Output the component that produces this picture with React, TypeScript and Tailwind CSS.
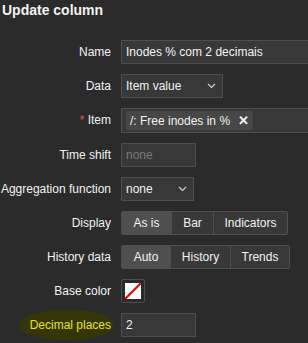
const labelCls = "text-right text-[12px] text-[#f2f2f2] leading-[24px] whitespace-nowrap";
const boxCls =
  "h-[24px] border border-[#4f4f4f] bg-[#383838] text-[12px] leading-[22px] px-[4px] box-border";
const inputCls = `${boxCls} text-[#f2f2f2]`;

function Chevron() {
  return (
    <svg width="9" height="6" viewBox="0 0 9 6" className="shrink-0">
      <path d="M1 1 L4.5 4.5 L8 1" fill="none" stroke="#d0d0d0" strokeWidth="1.2" />
    </svg>
  );
}

function Select({ value, width }: { value: string; width: string }) {
  return (
    <div className={`${inputCls} ${width} flex items-center justify-between pr-[6px]`}>
      <span>{value}</span>
      <Chevron />
    </div>
  );
}

function Segmented({ items, widths }: { items: string[]; widths: string[] }) {
  return (
    <div className="flex h-[24px] border border-[#4f4f4f] rounded-[2px] bg-[#383838] box-border">
      {items.map((label, i) => (
        <div
          key={label}
          className={`${widths[i]} flex items-center justify-center text-[12px] text-[#f2f2f2] ${
            i === 0 ? "bg-[#4f4f4f]" : "border-l border-[#4f4f4f]"
          }`}
        >
          {label}
        </div>
      ))}
    </div>
  );
}

export default function App() {
  return (
    <div
      className="w-[308px] h-[343px] overflow-hidden bg-[#2b2b2b] relative"
      style={{ fontFamily: '"Liberation Sans", Arial, sans-serif' }}
    >
      <div className="pl-[2px] pt-[1px] h-[40px] text-[14px] font-bold text-[#f2f2f2] leading-[18px]">
        Update column
      </div>
      <div className="grid grid-cols-[111px_1fr] gap-x-[10px] gap-y-[10px]">
        <div className={labelCls}>Name</div>
        <div className={`${inputCls} w-[220px]`}>Inodes % com 2 decimais</div>

        <div className={labelCls}>Data</div>
        <Select value="Item value" width="w-[102px]" />

        <div className={labelCls}>
          <span className="text-[#e45959]">*</span> Item
        </div>
        <div className={`${inputCls} w-[220px] h-[25px] flex items-center px-[2px]`}>
          <div className="h-[19px] flex items-center gap-[8px] bg-[#474747] rounded-[2px] px-[4px] text-[12px]">
            <span>/: Free inodes in %</span>
            <span className="font-bold text-[13px] leading-none">✕</span>
          </div>
        </div>

        <div className={labelCls}>Time shift</div>
        <div className={`${boxCls} w-[75px] text-[#7a7a7a]`}>none</div>

        <div className={labelCls}>Aggregation function</div>
        <Select value="none" width="w-[73px]" />

        <div className={labelCls}>Display</div>
        <div className="w-[167px]">
          <Segmented items={["As is", "Bar", "Indicators"]} widths={["w-[49px]", "w-[42px]", "flex-1"]} />
        </div>

        <div className={labelCls}>History data</div>
        <div className="w-[169px]">
          <Segmented items={["Auto", "History", "Trends"]} widths={["w-[48px]", "w-[60px]", "flex-1"]} />
        </div>

        <div className={labelCls}>Base color</div>
        <div className="w-[24px] h-[24px] border border-[#4f4f4f] rounded-[2px] p-[3px] box-border">
          <svg width="16" height="16" viewBox="0 0 16 16" className="block">
            <rect width="16" height="16" fill="#ffffff" />
            <line x1="0" y1="16" x2="16" y2="0" stroke="#e00000" strokeWidth="2" />
          </svg>
        </div>

        <div className={`${labelCls} flex justify-end`}>
          <span className="bg-[#35350a] rounded-[45%] pl-[10px] pr-[2px] -mr-[2px] leading-[30px] -my-[3px] text-[#e6e617]">
            Decimal places
          </span>
        </div>
        <div className={`${inputCls} w-[75px]`}>2</div>
      </div>
    </div>
  );
}
